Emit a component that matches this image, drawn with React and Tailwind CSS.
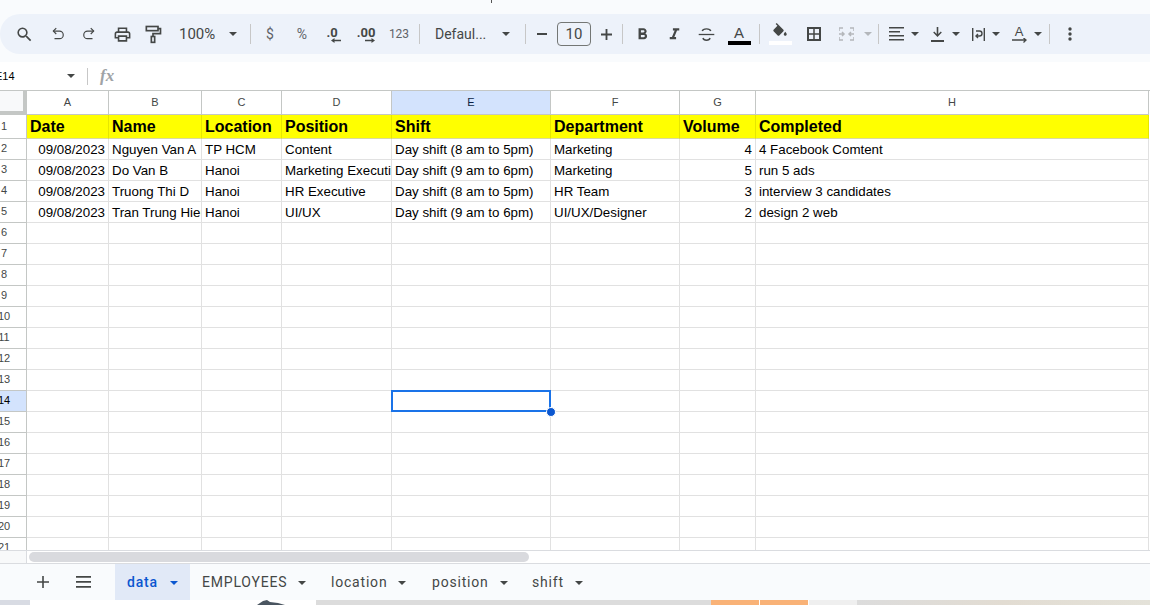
import React from "react";

const COLS = ["A", "B", "C", "D", "E", "F", "G", "H"];
const GRID = "grid grid-cols-[27px_82px_93px_80px_110px_159px_129px_76px_393px]";

const rows = [
    ["09/08/2023", "Nguyen Van A", "TP HCM", "Content", "Day shift (8 am to 5pm)", "Marketing", "4", "4 Facebook Comtent"],
    ["09/08/2023", "Do Van B", "Hanoi", "Marketing Executive", "Day shift (9 am to 6pm)", "Marketing", "5", "run 5 ads"],
    ["09/08/2023", "Truong Thi D", "Hanoi", "HR Executive", "Day shift (8 am to 5pm)", "HR Team", "3", "interview 3 candidates"],
    ["09/08/2023", "Tran Trung Hieu", "Hanoi", "UI/UX", "Day shift (9 am to 6pm)", "UI/UX/Designer", "2", "design 2 web"],
];

const titles = ["Date", "Name", "Location", "Position", "Shift", "Department", "Volume", "Completed"];
const emptyRows = Array.from({ length: 16 }, (_, i) => i + 6);
const tabs = [
    { name: "EMPLOYEES", width: "w-[129px]" },
    { name: "location", width: "w-[101px]" },
    { name: "position", width: "w-[100px]" },
    { name: "shift", width: "w-[74px]" },
];

// little triangle used all over the toolbar
const Caret = ({ color = "#444746" }) => (
    <svg width="8" height="4" viewBox="0 0 8 4"><path d="M0 0h8L4 4z" fill={color} /></svg>
);

const Sep = () => <div className="w-px h-5 bg-[#c7c7c7] shrink-0" />;

const Slot = ({ className, children }) => (
    <div className={`flex items-center justify-center shrink-0 h-full ${className}`}>{children}</div>
);

const Icon = ({ size = 18, children }) => (
    <svg width={size} height={size} viewBox="0 0 24 24" fill="none" stroke="#444746" strokeWidth="2">{children}</svg>
);

const RowNumber = ({ n, active }) => (
    <div className={`h-full border-r border-b border-[#c4c7c5] overflow-hidden flex items-center pb-px ${active ? "bg-[#d3e3fd] text-black" : "bg-white text-[#444746]"}`}>
        <div className="w-[8px] flex justify-center text-[11px]">{n}</div>
    </div>
);

const Toolbar = () => (
    <div className="h-10 bg-[#edf2fa] rounded-l-[20px] flex items-center pl-2 font-['Roboto',sans-serif] text-[#444746]">
        <Slot className="w-[32px]">
            <svg width="19" height="19" viewBox="0 0 24 24" fill="#444746"><path d="M15.5 14h-.79l-.28-.27A6.471 6.471 0 0 0 16 9.5 6.5 6.5 0 1 0 9.5 16c1.61 0 3.09-.59 4.23-1.57l.27.28v.79l5 4.99L20.49 19l-4.99-5zm-6 0C7.01 14 5 11.99 5 9.5S7.01 5 9.5 5 14 7.01 14 9.5 11.99 14 9.5 14z" /></svg>
        </Slot>
        <Slot className="w-[36px]">
            <Icon size={14}><path d="M9 2 4 7l5 5" /><path d="M4 7h10.500a5.500 5.500 0 0 1 0 13H6" /></Icon>
        </Slot>
        <Slot className="w-[26px]">
            <Icon size={14}><path d="m15 2 5 5-5 5" /><path d="M20 7H9.500a5.500 5.500 0 0 0 0 13H18" /></Icon>
        </Slot>
        <Slot className="w-[40px]">
            <svg width="19" height="19" viewBox="0 0 24 24" fill="#444746"><path d="M19 8h-1V3H6v5H5c-1.66 0-3 1.34-3 3v6h4v4h12v-4h4v-6c0-1.66-1.34-3-3-3zM8 5h8v3H8V5zm8 12v2H8v-4h8v2zm2-2v-2H6v2H4v-4c0-.55.45-1 1-1h14c.55 0 1 .45 1 1v4h-2z" /></svg>
        </Slot>
        <Slot className="w-[22px]">
            <Icon size={20}><rect x="4" y="3" width="14" height="5" /><path d="M18 5.500h3v6h-9v3" /><rect x="10" y="15" width="4" height="7" /></Icon>
        </Slot>
        <div className="ml-[15px] w-[37px] text-[15px] shrink-0">100%</div>
        <Slot className="w-[34px]"><Caret /></Slot>
        <Sep />
        <Slot className="w-[38px] text-[14px] text-[#5f6368]">$</Slot>
        <Slot className="w-[26px] text-[14px] text-[#5f6368]">%</Slot>
        <Slot className="w-[34px]">
            <div className="flex flex-col items-center leading-none">
                <span className="text-[13px] font-bold h-[12px]">.0</span>
                <svg className="ml-2" width="10" height="5" viewBox="0 0 10 5" fill="#444746"><path d="M0 2.500 3.500 0v1.700H10v1.600H3.500V5z" /></svg>
            </div>
        </Slot>
        <Slot className="w-[34px]">
            <div className="flex flex-col items-center leading-none">
                <span className="text-[13px] font-bold h-[12px]">.00</span>
                <svg className="ml-2" width="10" height="5" viewBox="0 0 10 5" fill="#444746"><path d="M10 2.500 6.500 0v1.700H0v1.600h6.500V5z" /></svg>
            </div>
        </Slot>
        <Slot className="w-[32px] text-[12px] text-[#5f6368]">123</Slot>
        <div className="ml-1"><Sep /></div>
        <div className="ml-[15px] w-[54px] text-[14px] shrink-0">Defaul...</div>
        <Slot className="w-[34px]"><Caret /></Slot>
        <div className="ml-[2px]"><Sep /></div>
        <Slot className="w-[31px]">
            <svg width="10" height="2" viewBox="0 0 10 2"><path d="M0 0h10v2H0z" fill="#444746" /></svg>
        </Slot>
        <div className="w-[34px] h-6 shrink-0 border border-[#747775] rounded-[4px] flex items-center justify-center text-[15px]">10</div>
        <Slot className="w-[30px]">
            <svg width="11" height="11" viewBox="0 0 12 12" fill="#444746"><path d="M5 0h2v5h5v2H7v5H5V7H0V5h5z" /></svg>
        </Slot>
        <div className="ml-px"><Sep /></div>
        <Slot className="w-[38px]">
            <svg width="19" height="19" viewBox="0 0 24 24" fill="#444746"><path d="M15.6 10.790c.97-.67 1.650-1.770 1.650-2.790 0-2.260-1.750-4-4-4H7v14h7.040c2.090 0 3.710-1.700 3.710-3.790 0-1.520-.86-2.820-2.150-3.420zM10 6.500h3c.83 0 1.500.67 1.500 1.500s-.67 1.500-1.500 1.500h-3v-3zm3.500 9H10v-3h3.500c.83 0 1.500.67 1.500 1.500s-.67 1.500-1.500 1.500z" /></svg>
        </Slot>
        <Slot className="w-[26px]">
            <svg width="19" height="19" viewBox="0 0 24 24" fill="#444746"><path d="M10 4v3h2.210l-3.420 8H6v3h8v-3h-2.210l3.420-8H18V4z" /></svg>
        </Slot>
        <Slot className="w-[38px]">
            <Icon size={17}><path d="M6 7c1-4 11-4 12 0" /><path d="M1 12h22" strokeWidth="1.800" /><path d="M7 17c1 4 9 4 10 0" /></Icon>
        </Slot>
        <Slot className="w-[28px]">
            <div className="flex flex-col items-center">
                <span className="font-['Liberation_Sans',sans-serif] text-[15px] leading-[14px] mt-[2px]">A</span>
                <div className="w-[23px] h-1 bg-black mt-[1px]" />
            </div>
        </Slot>
        <div className="ml-[6px]"><Sep /></div>
        <Slot className="w-[40px]">
            <div className="flex flex-col items-center">
                <svg width="18" height="18" viewBox="0 0 24 24" fill="#444746"><path d="M16.560 8.940 7.620 0 6.210 1.410l2.380 2.380-5.150 5.150c-.59.59-.59 1.540 0 2.120l5.500 5.500c.29.290.68.440 1.060.440s.770-.150 1.060-.440l5.500-5.500c.590-.580.590-1.530 0-2.120z" /><path d="M19 11.500s-2 2.170-2 3.500c0 1.100.900 2 2 2s2-.900 2-2c0-1.330-2-3.500-2-3.500z" /></svg>
                <div className="w-[23px] h-1 bg-white" />
            </div>
        </Slot>
        <Slot className="w-[28px]">
            <svg width="14" height="14" viewBox="0 0 14 14" fill="none" stroke="#444746" strokeWidth="2"><rect x="1" y="1" width="12" height="12" /><path d="M7 1v12M1 7h12" strokeWidth="1.500" /></svg>
        </Slot>
        <Slot className="w-[36px]">
            <svg width="15" height="14" viewBox="0 0 15 14" fill="none" stroke="#b4b7bb" strokeWidth="1.500"><path d="M0 1h4M11 1h4M0 13h4M11 13h4M0 1v3M15 1v3M0 10v3M15 10v3M0 7h5M3 5l2 2-2 2M15 7h-5M12 5l-2 2 2 2" /></svg>
        </Slot>
        <Slot className="w-[8px]"><Caret color="#b4b7bb" /></Slot>
        <div className="ml-[6px]"><Sep /></div>
        <div className="ml-[2px]" />
        <Slot className="w-[30px]">
            <svg width="15" height="14" viewBox="0 0 15 14" fill="#444746"><path d="M0 0h15v1.600H0zM0 4h11v1.600H0zM0 8h15v1.600H0zM0 12h15v1.600H0z" /></svg>
        </Slot>
        <Slot className="w-[8px]"><Caret /></Slot>
        <div className="ml-[3px]" />
        <Slot className="w-[30px]">
            <svg width="13" height="15" viewBox="0 0 13 15" fill="#444746"><path d="M0 13h13v2H0zM5.700 0h1.600v7l2.500-2.500 1 1L6.500 10 2.200 5.500l1-1 2.500 2.500z" /></svg>
        </Slot>
        <Slot className="w-[8px]"><Caret /></Slot>
        <div className="ml-1" />
        <Slot className="w-[28px]">
            <svg width="13" height="13" viewBox="0 0 13 13" fill="none" stroke="#444746" strokeWidth="1.400"><path d="M.7 0v13M12.300 0v13" /><path d="M4 3h3.500a2 2 0 0 1 0 5H4M6 6 4 8l2 2" /></svg>
        </Slot>
        <Slot className="w-[8px]"><Caret /></Slot>
        <div className="ml-1" />
        <Slot className="w-[30px]">
            <div className="flex flex-col items-center">
                <span className="font-['Liberation_Sans',sans-serif] text-[13px] leading-[12px]">A</span>
                <svg width="15" height="5" viewBox="0 0 15 5" fill="none" stroke="#444746" strokeWidth="1.300"><path d="M0 2h14M11.500 0 14 2l-2.500 2.500" /></svg>
            </div>
        </Slot>
        <Slot className="w-[8px]"><Caret /></Slot>
        <div className="ml-[7px]"><Sep /></div>
        <Slot className="w-[40px]">
            <svg width="4" height="14" viewBox="0 0 4 14" fill="#444746"><circle cx="2" cy="2" r="1.700" /><circle cx="2" cy="7" r="1.700" /><circle cx="2" cy="12" r="1.700" /></svg>
        </Slot>
    </div>
);

const Sheet = () => (
    <div className="relative h-[460px] overflow-hidden font-['Liberation_Sans',sans-serif] bg-white">
        {/* column letters */}
        <div className={`${GRID} h-[25px] border-t border-[#c4c7c5]`}>
            <div className="bg-[#f8f9fa] border-r-[4px] border-b-[4px] border-[#c4c7c5]" />
            {COLS.map((c) => (
                <div key={c} className={`border-r border-b border-[#c4c7c5] flex items-center justify-center text-[11px] ${c === "E" ? "bg-[#d3e3fd] text-[#0b1f44]" : "text-[#444746]"}`}>{c}</div>
            ))}
        </div>

        {/* yellow title row */}
        <div className={`${GRID} h-6`}>
            <RowNumber n={1} />
            {titles.map((t) => (
                <div key={t} className="bg-[#ffff00] border-r border-r-[#e6e600] border-b border-b-[#d9d9a0] px-[3px] flex items-center overflow-hidden whitespace-nowrap text-[16px] font-bold text-black">{t}</div>
            ))}
        </div>

        {rows.map((row, i) => (
            <div key={i} className={`${GRID} h-[21px]`}>
                <RowNumber n={i + 2} />
                {row.map((val, j) => (
                    <div key={j} className={`border-r border-b border-[#e1e1e1] px-[3px] pt-px flex items-center overflow-hidden whitespace-nowrap text-[13.33px] text-black ${j === 0 || j === 6 ? "justify-end" : ""}`}>{val}</div>
                ))}
            </div>
        ))}

        {emptyRows.map((n) => (
            <div key={n} className={`${GRID} h-[21px]`}>
                <RowNumber n={n} active={n === 14} />
                {COLS.map((c) => (
                    <div key={c} className="border-r border-b border-[#e1e1e1]" />
                ))}
            </div>
        ))}

        {/* selected cell E14 */}
        <div className="absolute left-[391px] top-[300px] w-[160px] h-[22px] border-2 border-[#1a73e8]">
            <div className="absolute -right-[7px] -bottom-[7px] w-[10px] h-[10px] rounded-full bg-[#0b57d0] border border-white" />
        </div>
    </div>
);

const App = () => {
    return (
        <div className="relative w-full h-[605px] overflow-hidden bg-white flex flex-col">
            <div className="absolute left-[491px] top-0 w-px h-[3px] bg-[#555555]" />
            <div className="bg-[#f9fbfd] pt-[14px] pb-2">
                <Toolbar />
            </div>

            {/* name box + formula bar */}
            <div className="h-7 flex items-center bg-white font-['Liberation_Sans',sans-serif] text-[#444746]">
                <span className="-ml-[5px] w-[72px] shrink-0 text-[11px] text-black">E14</span>
                <Caret />
                <div className="ml-3 w-px h-[17px] bg-[#c7c7c7]" />
                <span className="ml-3 font-['Liberation_Serif',serif] italic font-bold text-[17px] text-[#a0a3a6]">fx</span>
            </div>

            <Sheet />

            {/* horizontal scrollbar */}
            <div className="h-[14px] flex border-y border-[#dadce0] bg-white">
                <div className="w-[27px] bg-[#f8f9fa] border-r border-[#dadce0]" />
                <div className="ml-[2px] mt-px w-[500px] h-[10px] rounded-full bg-[#d9dade]" />
            </div>

            {/* sheet tabs */}
            <div className="h-9 flex items-center bg-[#f9fbfd] pl-7 font-['Roboto',sans-serif] text-[14px] tracking-[0.8px] text-[#444746]">
                <Slot className="w-[30px]">
                    <svg width="12" height="12" viewBox="0 0 12 12" fill="#444746"><path d="M5.200 0h1.600v5.200H12v1.600H6.800V12H5.200V6.800H0V5.200h5.200z" /></svg>
                </Slot>
                <Slot className="w-[30px] ml-[10px]">
                    <svg width="15" height="12" viewBox="0 0 15 12" fill="#444746"><path d="M0 0h15v1.700H0zM0 5h15v1.700H0zM0 10h15v1.700H0z" /></svg>
                </Slot>
                <div className="ml-[17px] w-[75px] h-full bg-[#e1e9f7] text-[#0b57d0] font-medium flex items-center pl-3 pt-px shrink-0">
                    <span className="w-[43px]">data</span>
                    <Caret color="#0b57d0" />
                </div>
                {tabs.map((t) => (
                    <div key={t.name} className={`${t.width} h-full flex items-center pl-3 pt-px gap-[11px] shrink-0`}>
                        <span>{t.name}</span>
                        <Caret />
                    </div>
                ))}
            </div>

            {/* bit of the window behind the sheet */}
            <div className="h-[5px] flex">
                <div className="w-[30px] bg-[#d8dbe3]" />
                <div className="w-[286px] bg-white flex justify-end pr-[31px]">
                    <svg width="28" height="5" viewBox="0 0 28 5"><path d="M0 5 6 1l4-1 3 2 8 1 7 2z" fill="#4a5560" /></svg>
                </div>
                <div className="w-[395px] bg-[#dcdcdc]" />
                <div className="w-[48px] bg-[#f9b277]" />
                <div className="w-px bg-white" />
                <div className="w-[48px] bg-[#f9b277]" />
                <div className="w-px bg-white" />
                <div className="w-[48px] bg-[#efefef]" />
                <div className="flex-1 bg-gradient-to-r from-[#dcdcdc] via-[#e2dcd2] to-[#e4e2d9]" />
            </div>
        </div>
    );
};

export default App;
